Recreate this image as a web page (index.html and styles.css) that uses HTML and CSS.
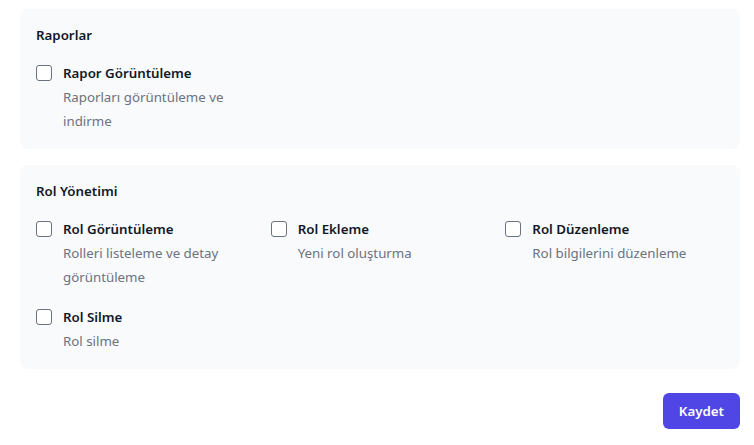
FILE: index.html
```html
<!DOCTYPE html>
<html lang="tr">
<head>
<meta charset="utf-8">
<link rel="stylesheet" href="styles.css">
</head>
<body>
<div class="page">
  <section class="card">
    <h3 class="card-title">Raporlar</h3>
    <div class="grid">
      <label class="perm">
        <span class="box"></span>
        <span class="text">
          <span class="name">Rapor Görüntüleme</span>
          <span class="desc">Raporları görüntüleme ve indirme</span>
        </span>
      </label>
    </div>
  </section>
  <section class="card">
    <h3 class="card-title">Rol Yönetimi</h3>
    <div class="grid">
      <label class="perm">
        <span class="box"></span>
        <span class="text">
          <span class="name">Rol Görüntüleme</span>
          <span class="desc">Rolleri listeleme ve detay görüntüleme</span>
        </span>
      </label>
      <label class="perm">
        <span class="box"></span>
        <span class="text">
          <span class="name">Rol Ekleme</span>
          <span class="desc">Yeni rol oluşturma</span>
        </span>
      </label>
      <label class="perm">
        <span class="box"></span>
        <span class="text">
          <span class="name">Rol Düzenleme</span>
          <span class="desc">Rol bilgilerini düzenleme</span>
        </span>
      </label>
      <label class="perm">
        <span class="box"></span>
        <span class="text">
          <span class="name">Rol Silme</span>
          <span class="desc">Rol silme</span>
        </span>
      </label>
    </div>
  </section>
  <div class="actions">
    <button class="btn" type="button">Kaydet</button>
  </div>
</div>
</body>
</html>
```
FILE: styles.css
```css
* { box-sizing: border-box; }
html, body { margin: 0; padding: 0; background: #ffffff; }
body {
  font-family: "Noto Sans", "Open Sans", sans-serif;
  color: #111827;
}
.page {
  padding: 9px 14px 0 20px;
  display: flex;
  flex-direction: column;
  gap: 16px;
}
.card {
  background: #f9fafb;
  border-radius: 8px;
  padding: 16px;
}
.card-title {
  margin: 0 0 16px;
  font-size: 13.3px;
  line-height: 20px;
  font-weight: 600;
  color: #111827;
}
.grid {
  display: grid;
  grid-template-columns: repeat(3, 1fr);
  gap: 16px;
}
.perm {
  display: flex;
  align-items: flex-start;
  gap: 11px;
}
.box {
  flex: none;
  width: 16px;
  height: 16px;
  margin-top: 4px;
  border: 1px solid #6b7280;
  border-radius: 3px;
  background: #fff;
}
.text { display: flex; flex-direction: column; }
.name {
  font-size: 13.3px;
  line-height: 24px;
  font-weight: 600;
  color: #111827;
}
.desc {
  font-size: 13.3px;
  line-height: 24px;
  color: #6b7280;
}
.actions {
  display: flex;
  justify-content: flex-end;
  margin-top: 8px;
}
.btn {
  font-family: inherit;
  font-size: 13.3px;
  font-weight: 600;
  line-height: 20px;
  color: #fff;
  background: #4f46e5;
  border: 0;
  border-radius: 6px;
  padding: 8px 16px;
  height: 36px;
}
```
